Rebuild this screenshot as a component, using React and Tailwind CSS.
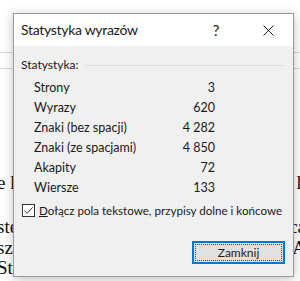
import React from 'react'

const stats = [
  { label: 'Strony', value: '3' },
  { label: 'Wyrazy', value: '620' },
  { label: 'Znaki (bez spacji)', value: '4 282' },
  { label: 'Znaki (ze spacjami)', value: '4 850' },
  { label: 'Akapity', value: '72' },
  { label: 'Wiersze', value: '133' },
]

const docLines = [
  { left: 'e k', right: 'k', top: 'top-[172px]' },
  { left: 'ste', right: 'ca', top: 'top-[216px]' },
  { left: 'sz', right: 'A', top: 'top-[237px]' },
  { left: 'St', right: '', top: 'top-[257px]' },
]

const App = () => {
  return (
    <div className="relative w-[300px] h-[281px] overflow-hidden bg-white">
      {/* document behind the dialog */}
      <div className="absolute inset-x-0 top-[52px] h-px bg-[#d6d6d6]"></div>
      <div className="absolute inset-x-0 top-[68px] h-px bg-[#d6d6d6]"></div>
      {docLines.map((l) => (
        <div
          key={l.left}
          className={`absolute inset-x-0 ${l.top} flex justify-between text-[19px] leading-[22px] text-[#111] font-['Liberation_Serif',serif]`}
        >
          <span className="-ml-[3px]">{l.left}</span>
          <span className="-mr-[6px]">{l.right}</span>
        </div>
      ))}

      {/* dialog */}
      <div className="absolute left-[13px] top-[13px] w-[281px] h-[264px] flex flex-col border border-[#9a9a9a] shadow-[0_2px_10px_rgba(0,0,0,0.25)] font-['Lato',sans-serif] text-[#1a1a1a]">
        <div className="h-[32px] bg-white flex items-center pl-[7px] shrink-0">
          <span className="text-[14px] tracking-[-0.3px] leading-none flex-1 whitespace-nowrap">Statystyka wyrazów</span>
          <span className="text-[15px] leading-none w-[20px] text-center mr-[37px]">?</span>
          <svg width="11" height="11" viewBox="0 0 11 11" className="mr-[19px]">
            <path d="M0.5 0.5 L10.5 10.5 M10.5 0.5 L0.5 10.5" stroke="#222" strokeWidth="1" fill="none" />
          </svg>
        </div>
        <div className="flex-1 bg-[#f0f0f0] flex flex-col pl-[7px] pr-[8px]">
          <div className="flex items-center mt-[12px] h-[14px]">
            <span className="text-[12px] leading-none">Statystyka:</span>
            <div className="flex-1 h-px bg-[#dcdcdc] ml-[6px] mr-[1px]"></div>
          </div>
          <div className="flex flex-col mt-[6px]">
            {stats.map((s) => (
              <div key={s.label} className="flex items-center h-[20px] text-[12.5px] leading-none">
                <span className="w-[150px] pl-[13px] whitespace-nowrap">{s.label}</span>
                <span className="w-[44px] text-right whitespace-nowrap">{s.value}</span>
              </div>
            ))}
          </div>
          <label className="flex items-center mt-[6px] text-[11.6px] leading-none whitespace-nowrap">
            <span className="w-[13px] h-[13px] border border-[#333] bg-white flex items-center justify-center ml-[1px] shrink-0">
              <svg width="11" height="11" viewBox="0 0 11 11">
                <path d="M1.5 5.5 L4.2 8.3 L9.6 2.4" stroke="#333" strokeWidth="1" fill="none" />
              </svg>
            </span>
            <span className="ml-[4px]">
              <span className="underline">D</span>ołącz pola tekstowe, przypisy dolne i końcowe
            </span>
          </label>
          <div className="flex justify-end mt-[24px]">
            <button className="w-[93px] h-[23px] border-2 border-[#0078d7] bg-[#e1e1e1] p-[1px] text-[12px] leading-none text-[#1a1a1a]">
              <span className="w-full h-full flex items-center justify-center border border-dotted border-[#444]">
                Zamknij
              </span>
            </button>
          </div>
        </div>
      </div>
    </div>
  )
}

export default App
